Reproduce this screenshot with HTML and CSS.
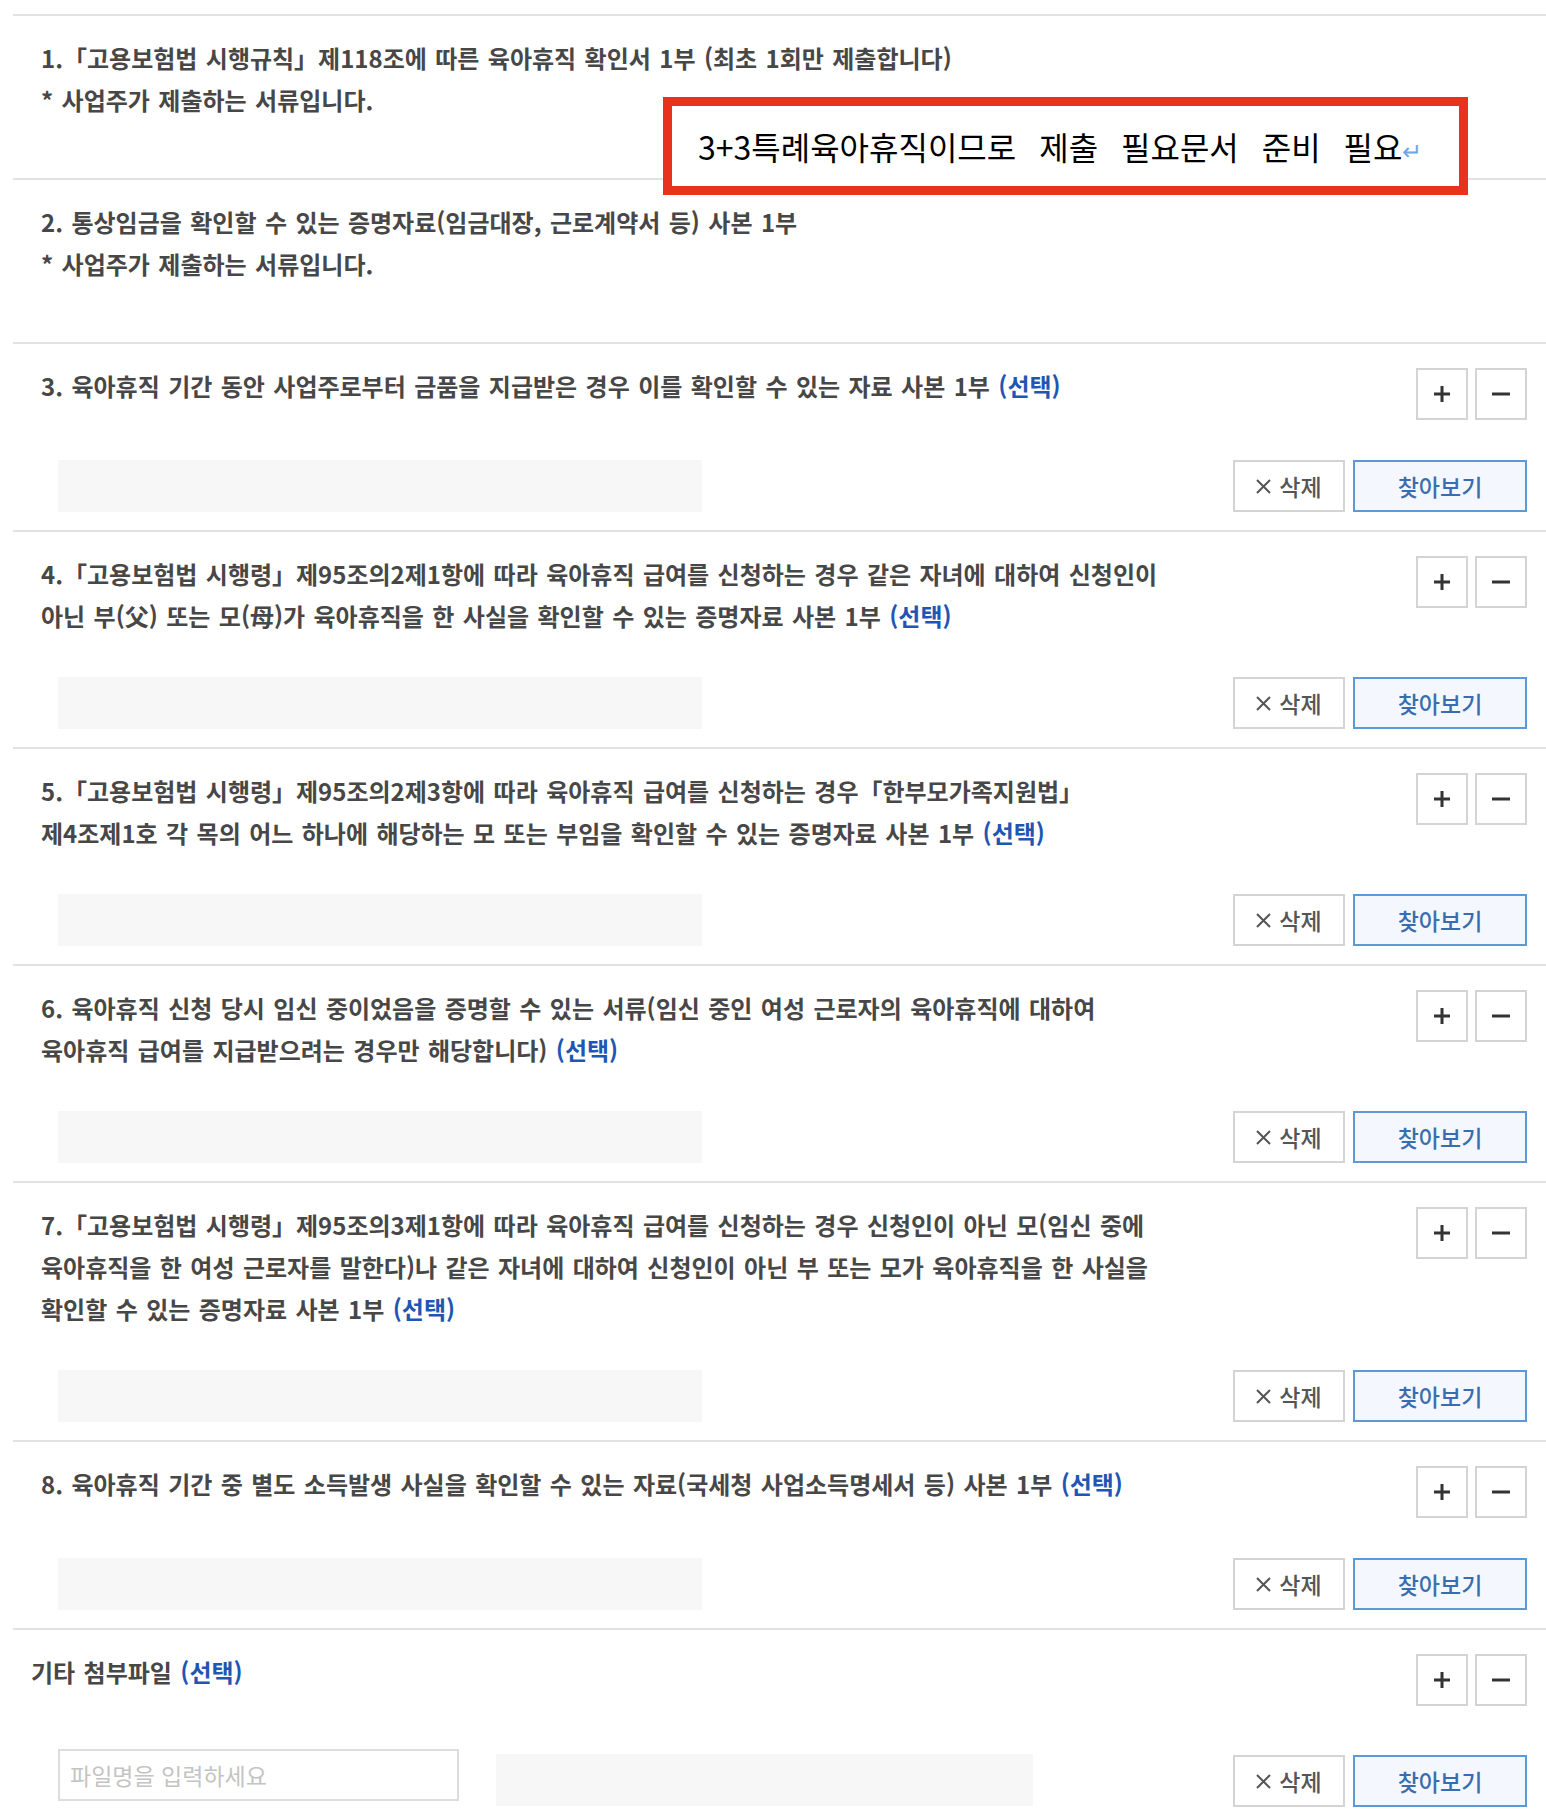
FILE: index.html
```html
<!DOCTYPE html>
<html lang="ko">
<head>
<meta charset="UTF-8">
<title>첨부서류</title>
<link rel="stylesheet" href="styles.css">
</head>
<body>

<div class="doc-list">
    <div class="doc-item doc-item--note">
        <p class="doc-title">1.「고용보험법 시행규칙」제118조에 따른 육아휴직 확인서 1부 (최초 1회만 제출합니다)<br>* 사업주가 제출하는 서류입니다.</p>
    </div>

    <div class="doc-item doc-item--note">
        <p class="doc-title">2. 통상임금을 확인할 수 있는 증명자료(임금대장, 근로계약서 등) 사본 1부<br>* 사업주가 제출하는 서류입니다.</p>
    </div>

    <div class="doc-item">
        <div class="doc-head">
            <p class="doc-title">3. 육아휴직 기간 동안 사업주로부터 금품을 지급받은 경우 이를 확인할 수 있는 자료 사본 1부 <span class="opt">(선택)</span></p>
            <div class="count-btns">
                <button class="btn-count"><svg width="20" height="20" viewBox="0 0 20 20"><path d="M10 2v16M2 10h16" stroke="#333" stroke-width="3"/></svg></button>
                <button class="btn-count"><svg width="20" height="20" viewBox="0 0 20 20"><path d="M1 10h18" stroke="#333" stroke-width="3"/></svg></button>
            </div>
        </div>
        <div class="doc-file">
            <div class="file-box"></div>
            <div class="file-btns">
                <button class="btn-del"><svg width="15" height="15" viewBox="0 0 15 15"><path d="M1 1l13 13M14 1L1 14" stroke="#555" stroke-width="2"/></svg> 삭제</button>
                <button class="btn-find">찾아보기</button>
            </div>
        </div>
    </div>

    <div class="doc-item">
        <div class="doc-head">
            <p class="doc-title">4.「고용보험법 시행령」제95조의2제1항에 따라 육아휴직 급여를 신청하는 경우 같은 자녀에 대하여 신청인이<br>아닌 부(父) 또는 모(母)가 육아휴직을 한 사실을 확인할 수 있는 증명자료 사본 1부 <span class="opt">(선택)</span></p>
            <div class="count-btns">
                <button class="btn-count"><svg width="20" height="20" viewBox="0 0 20 20"><path d="M10 2v16M2 10h16" stroke="#333" stroke-width="3"/></svg></button>
                <button class="btn-count"><svg width="20" height="20" viewBox="0 0 20 20"><path d="M1 10h18" stroke="#333" stroke-width="3"/></svg></button>
            </div>
        </div>
        <div class="doc-file">
            <div class="file-box"></div>
            <div class="file-btns">
                <button class="btn-del"><svg width="15" height="15" viewBox="0 0 15 15"><path d="M1 1l13 13M14 1L1 14" stroke="#555" stroke-width="2"/></svg> 삭제</button>
                <button class="btn-find">찾아보기</button>
            </div>
        </div>
    </div>

    <div class="doc-item">
        <div class="doc-head">
            <p class="doc-title">5.「고용보험법 시행령」제95조의2제3항에 따라 육아휴직 급여를 신청하는 경우「한부모가족지원법」<br>제4조제1호 각 목의 어느 하나에 해당하는 모 또는 부임을 확인할 수 있는 증명자료 사본 1부 <span class="opt">(선택)</span></p>
            <div class="count-btns">
                <button class="btn-count"><svg width="20" height="20" viewBox="0 0 20 20"><path d="M10 2v16M2 10h16" stroke="#333" stroke-width="3"/></svg></button>
                <button class="btn-count"><svg width="20" height="20" viewBox="0 0 20 20"><path d="M1 10h18" stroke="#333" stroke-width="3"/></svg></button>
            </div>
        </div>
        <div class="doc-file">
            <div class="file-box"></div>
            <div class="file-btns">
                <button class="btn-del"><svg width="15" height="15" viewBox="0 0 15 15"><path d="M1 1l13 13M14 1L1 14" stroke="#555" stroke-width="2"/></svg> 삭제</button>
                <button class="btn-find">찾아보기</button>
            </div>
        </div>
    </div>

    <div class="doc-item">
        <div class="doc-head">
            <p class="doc-title">6. 육아휴직 신청 당시 임신 중이었음을 증명할 수 있는 서류(임신 중인 여성 근로자의 육아휴직에 대하여<br>육아휴직 급여를 지급받으려는 경우만 해당합니다) <span class="opt">(선택)</span></p>
            <div class="count-btns">
                <button class="btn-count"><svg width="20" height="20" viewBox="0 0 20 20"><path d="M10 2v16M2 10h16" stroke="#333" stroke-width="3"/></svg></button>
                <button class="btn-count"><svg width="20" height="20" viewBox="0 0 20 20"><path d="M1 10h18" stroke="#333" stroke-width="3"/></svg></button>
            </div>
        </div>
        <div class="doc-file">
            <div class="file-box"></div>
            <div class="file-btns">
                <button class="btn-del"><svg width="15" height="15" viewBox="0 0 15 15"><path d="M1 1l13 13M14 1L1 14" stroke="#555" stroke-width="2"/></svg> 삭제</button>
                <button class="btn-find">찾아보기</button>
            </div>
        </div>
    </div>

    <div class="doc-item">
        <div class="doc-head">
            <p class="doc-title">7.「고용보험법 시행령」제95조의3제1항에 따라 육아휴직 급여를 신청하는 경우 신청인이 아닌 모(임신 중에<br>육아휴직을 한 여성 근로자를 말한다)나 같은 자녀에 대하여 신청인이 아닌 부 또는 모가 육아휴직을 한 사실을<br>확인할 수 있는 증명자료 사본 1부 <span class="opt">(선택)</span></p>
            <div class="count-btns">
                <button class="btn-count"><svg width="20" height="20" viewBox="0 0 20 20"><path d="M10 2v16M2 10h16" stroke="#333" stroke-width="3"/></svg></button>
                <button class="btn-count"><svg width="20" height="20" viewBox="0 0 20 20"><path d="M1 10h18" stroke="#333" stroke-width="3"/></svg></button>
            </div>
        </div>
        <div class="doc-file">
            <div class="file-box"></div>
            <div class="file-btns">
                <button class="btn-del"><svg width="15" height="15" viewBox="0 0 15 15"><path d="M1 1l13 13M14 1L1 14" stroke="#555" stroke-width="2"/></svg> 삭제</button>
                <button class="btn-find">찾아보기</button>
            </div>
        </div>
    </div>

    <div class="doc-item">
        <div class="doc-head">
            <p class="doc-title">8. 육아휴직 기간 중 별도 소득발생 사실을 확인할 수 있는 자료(국세청 사업소득명세서 등) 사본 1부 <span class="opt">(선택)</span></p>
            <div class="count-btns">
                <button class="btn-count"><svg width="20" height="20" viewBox="0 0 20 20"><path d="M10 2v16M2 10h16" stroke="#333" stroke-width="3"/></svg></button>
                <button class="btn-count"><svg width="20" height="20" viewBox="0 0 20 20"><path d="M1 10h18" stroke="#333" stroke-width="3"/></svg></button>
            </div>
        </div>
        <div class="doc-file">
            <div class="file-box"></div>
            <div class="file-btns">
                <button class="btn-del"><svg width="15" height="15" viewBox="0 0 15 15"><path d="M1 1l13 13M14 1L1 14" stroke="#555" stroke-width="2"/></svg> 삭제</button>
                <button class="btn-find">찾아보기</button>
            </div>
        </div>
    </div>

    <div class="doc-item doc-item--etc">
        <div class="doc-head">
            <p class="doc-title">기타 첨부파일 <span class="opt">(선택)</span></p>
            <div class="count-btns">
                <button class="btn-count"><svg width="20" height="20" viewBox="0 0 20 20"><path d="M10 2v16M2 10h16" stroke="#333" stroke-width="3"/></svg></button>
                <button class="btn-count"><svg width="20" height="20" viewBox="0 0 20 20"><path d="M1 10h18" stroke="#333" stroke-width="3"/></svg></button>
            </div>
        </div>
        <div class="doc-file">
            <input class="file-input" type="text" placeholder="파일명을 입력하세요">
            <div class="file-box file-box--short"></div>
            <div class="file-btns">
                <button class="btn-del"><svg width="15" height="15" viewBox="0 0 15 15"><path d="M1 1l13 13M14 1L1 14" stroke="#555" stroke-width="2"/></svg> 삭제</button>
                <button class="btn-find">찾아보기</button>
            </div>
        </div>
    </div>
</div>

<div class="memo">3+3특례육아휴직이므로 제출 필요문서 준비 필요<span class="memo-ret">↵</span></div>

</body>
</html>
```

FILE: styles.css
```css
    :root {
        --text: #474747;
        --line: #e2e2e2;
        --blue: #1f56b3;
        --box: #f7f7f7;
    }

    body {
        margin: 0;
        background: #fff;
        color: var(--text);
        font-family: "Noto Sans CJK KR", "Noto Sans", sans-serif;
    }

    .doc-list {
        margin: 14px 0 0 13px;
        border-top: 2px solid var(--line);
    }

    .doc-item {
        padding: 21px 19px 18px 28px;
        border-bottom: 2px solid var(--line);
    }

    .doc-item--note {
        padding-bottom: 57px;
    }

    .doc-item--etc {
        padding-left: 18px;
    }

    .doc-title {
        margin: 0;
        font-size: 24px;
        font-weight: 700;
        line-height: 42px;
        word-spacing: 1.7px;
        white-space: nowrap;
    }

    .opt {
        color: var(--blue);
    }

    .doc-head {
        display: flex;
        justify-content: space-between;
        align-items: flex-start;
    }

    .count-btns {
        display: flex;
        gap: 7px;
        margin-top: 3px;
    }

    .btn-count {
        width: 52px;
        height: 52px;
        padding: 0;
        background: #fff;
        border: 2px solid #d4d4d4;
        display: flex;
        align-items: center;
        justify-content: center;
    }

    .doc-file {
        display: flex;
        align-items: flex-start;
        margin-top: 40px;
        padding-left: 17px;
    }

    .doc-item--etc .doc-file {
        margin-top: 43px;
        padding-left: 27px;
    }

    .file-box {
        width: 644px;
        height: 52px;
        background: var(--box);
    }

    .file-box--short {
        width: 537px;
        margin: 5px 0 0 37px;
    }

    .file-input {
        width: 401px;
        height: 52px;
        box-sizing: border-box;
        border: 2px solid #ddd;
        padding: 0 10px;
        font-family: inherit;
        font-size: 23px;
        color: var(--text);
        outline: none;
    }

    .file-input::placeholder {
        color: #c4c4c4;
    }

    .file-btns {
        margin-left: auto;
        display: flex;
        gap: 8px;
    }

    .doc-item--etc .file-btns {
        margin-top: 6px;
    }

    .btn-del,
    .btn-find {
        height: 52px;
        font-family: inherit;
        font-size: 23px;
        font-weight: 500;
        cursor: pointer;
    }

    .btn-del {
        width: 112px;
        background: #fff;
        border: 2px solid #d4d4d4;
        color: #555;
        display: flex;
        align-items: center;
        justify-content: center;
        gap: 8px;
    }

    .btn-find {
        width: 174px;
        background: #f4f8fe;
        border: 2px solid #5b9ad6;
        color: #3a6db0;
    }

    .memo {
        position: absolute;
        left: 663px;
        top: 97px;
        width: 805px;
        height: 98px;
        box-sizing: border-box;
        border: 9px solid #e8321e;
        background: #fff;
        padding-left: 26px;
        font-size: 32px;
        line-height: 80px;
        word-spacing: 14px;
        color: #000;
        white-space: nowrap;
    }

    .memo-ret {
        color: #6aa8ea;
        font-size: 24px;
    }
```
